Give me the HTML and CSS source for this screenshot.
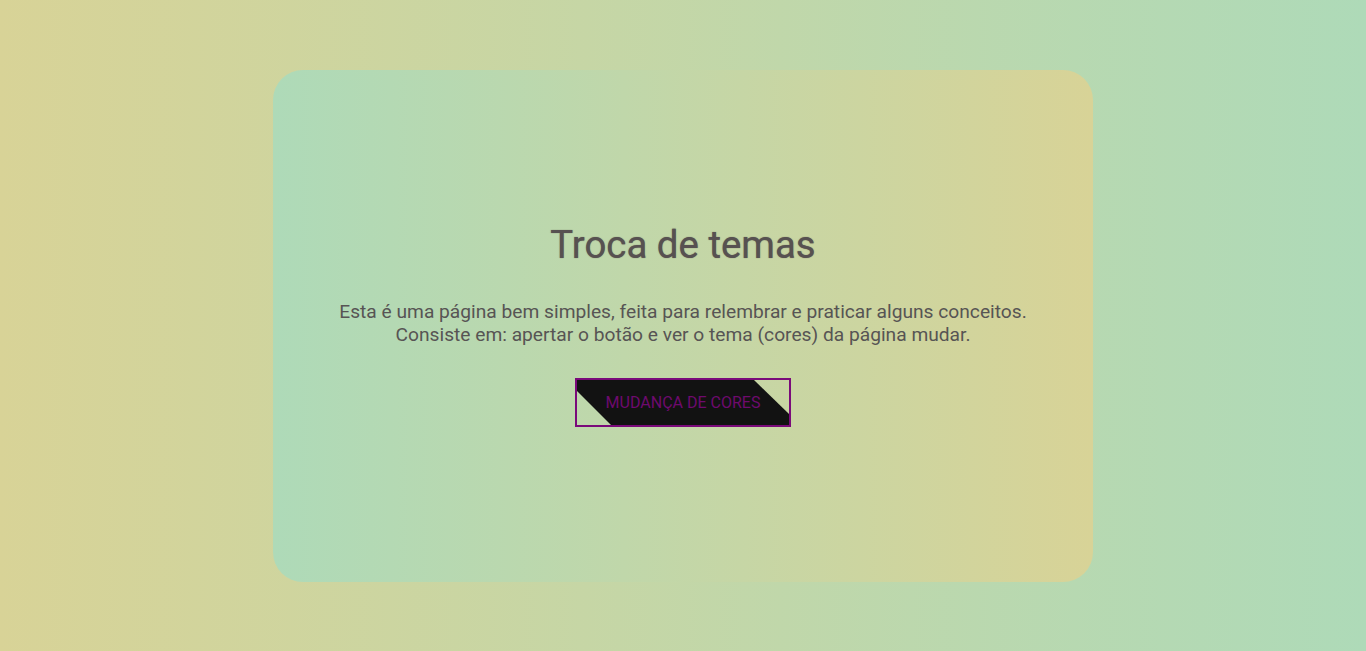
FILE: index.html
```html
<!DOCTYPE html>
<html lang="pt-BR">
<head>
<meta charset="utf-8">
<title>Troca de temas</title>
<link rel="stylesheet" href="styles.css">
</head>
<body>
<main class="page">
  <section class="card">
    <h1 class="title">Troca de temas</h1>
    <p class="text">Esta é uma página bem simples, feita para relembrar e praticar alguns conceitos.<br>Consiste em: apertar o botão e ver o tema (cores) da página mudar.</p>
    <button class="btn" type="button"><span class="btn-label">MUDANÇA DE CORES</span></button>
  </section>
</main>
</body>
</html>
```

FILE: styles.css
```css
html, body {
  margin: 0;
  padding: 0;
  height: 100%;
}
body {
  font-family: Roboto, "Liberation Sans", sans-serif;
  background: linear-gradient(to right, #d8d397, #aedab8);
}
.page {
  height: 100vh;
  display: flex;
  align-items: center;
  justify-content: center;
}
.card {
  width: 60%;
  height: 512px;
  border-radius: 30px;
  background: linear-gradient(to right, #aedab8, #d8d397);
  display: flex;
  flex-direction: column;
  align-items: center;
  justify-content: center;
  text-align: center;
}
.title {
  margin: 0 0 6px;
  font-size: 38.4px;
  line-height: 42px;
  font-weight: 400;
  color: #575151;
  text-shadow: 0 0 1px rgba(60, 50, 50, 0.7);
}
.text {
  margin: 28px 0 0;
  font-size: 19.2px;
  line-height: 23px;
  color: #575454;
}
.btn {
  margin-top: 32px;
  position: relative;
  width: 216px;
  height: 49px;
  border: 2px solid #7a0a7a;
  background: transparent;
  padding: 0;
  cursor: pointer;
  font-family: inherit;
}
.btn::before {
  content: "";
  position: absolute;
  inset: 0;
  background: #121212;
  clip-path: polygon(0 0, calc(100% - 35px) 0, 100% 34px, 100% 100%, 34px 100%, 0 calc(100% - 34px));
}
.btn-label {
  position: relative;
  font-size: 16px;
  color: #6e0a6e;
  letter-spacing: 0;
}
```
